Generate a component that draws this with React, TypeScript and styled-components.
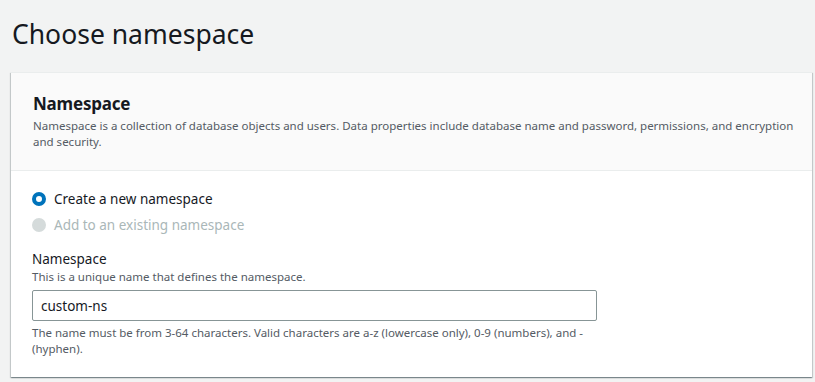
import { useState } from 'react';

import styled, { createGlobalStyle } from 'styled-components';

const GlobalStyle = createGlobalStyle`
  html, body {
    margin: 0;
    padding: 0;
    background: #f2f3f3;
    font-family: 'Noto Sans', 'Open Sans', Arial, sans-serif;
    color: #16191f;
  }
`;

type NamespaceMode = 'new' | 'existing';

function App() {
  const [mode, setMode] = useState<NamespaceMode>('new');
  const [name, setName] = useState<string>('custom-ns');

  return (
    <Page>
      <GlobalStyle />
      <Title>Choose namespace</Title>
      <Card>
        <CardHeader>
          <CardTitle>Namespace</CardTitle>
          <CardDescription>
            Namespace is a collection of database objects and users. Data
            properties include database name and password, permissions, and
            encryption and security.
          </CardDescription>
        </CardHeader>
        <CardBody>
          <RadioGroup>
            <RadioRow onClick={() => setMode('new')}>
              <RadioDot $checked={mode === 'new'} />
              <RadioLabel>Create a new namespace</RadioLabel>
            </RadioRow>
            <RadioRow $disabled>
              <RadioDot $disabled />
              <RadioLabel $disabled>Add to an existing namespace</RadioLabel>
            </RadioRow>
          </RadioGroup>
          <Field>
            <FieldLabel>Namespace</FieldLabel>
            <FieldDescription>
              This is a unique name that defines the namespace.
            </FieldDescription>
            <TextInput
              type="text"
              value={name}
              onChange={(e) => setName(e.target.value)}
            />
            <FieldHint>
              The name must be from 3-64 characters. Valid characters are a-z
              (lowercase only), 0-9 (numbers), and - (hyphen).
            </FieldHint>
          </Field>
        </CardBody>
      </Card>
    </Page>
  );
}

const Page = styled.div`
  padding: 14px 3px 0 11px;
  box-sizing: border-box;
  width: 815px;
  height: 382px;
  overflow: hidden;
`;

const Title = styled.h1`
  margin: 0 0 0 1px;
  font-size: 26.5px;
  font-weight: 400;
  line-height: 40px;
  height: 58px;
`;

const Card = styled.div`
  background: #ffffff;
  border-top: 1px solid #eaeded;
  box-shadow: 0 1px 1px 0 rgba(0, 28, 36, 0.3),
    1px 1px 1px 0 rgba(0, 28, 36, 0.15), -1px 1px 1px 0 rgba(0, 28, 36, 0.15);
`;

const CardHeader = styled.div`
  background: #fafafa;
  border-bottom: 1px solid #eaeded;
  padding: 19px 10px 20px 22px;
`;

const CardTitle = styled.h2`
  margin: 0;
  font-size: 17px;
  font-weight: 700;
  letter-spacing: -0.2px;
  line-height: 24px;
`;

const CardDescription = styled.p`
  margin: 2px 0 0;
  font-size: 11.5px;
  line-height: 16px;
  color: #545b64;
`;

const CardBody = styled.div`
  padding: 18px 20px 20px 21px;
`;

const RadioGroup = styled.div`
  display: flex;
  flex-direction: column;
  gap: 6px;
`;

const RadioRow = styled.label<{ $disabled?: boolean }>`
  display: flex;
  align-items: center;
  gap: 8px;
  height: 20px;
  cursor: ${({ $disabled }) => ($disabled ? 'default' : 'pointer')};
`;

const RadioDot = styled.span<{ $checked?: boolean; $disabled?: boolean }>`
  width: 14px;
  height: 14px;
  border-radius: 50%;
  box-sizing: border-box;
  flex-shrink: 0;
  background: ${({ $disabled }) => ($disabled ? '#d5dbdb' : '#ffffff')};
  border: ${({ $checked, $disabled }) =>
    $disabled
      ? '2px solid #d5dbdb'
      : $checked
        ? '4px solid #0073bb'
        : '2px solid #aab7b8'};
`;

const RadioLabel = styled.span<{ $disabled?: boolean }>`
  font-size: 13.5px;
  line-height: 20px;
  color: ${({ $disabled }) => ($disabled ? '#aab7b8' : '#16191f')};
`;

const Field = styled.div`
  margin-top: 14px;
  display: flex;
  flex-direction: column;
`;

const FieldLabel = styled.div`
  font-size: 13.5px;
  line-height: 20px;
`;

const FieldDescription = styled.div`
  font-size: 11.5px;
  line-height: 16px;
  color: #545b64;
`;

const TextInput = styled.input`
  margin-top: 5px;
  width: 565px;
  height: 31px;
  box-sizing: border-box;
  padding: 4px 8px;
  border: 1px solid #879596;
  border-radius: 2px;
  font-family: inherit;
  font-size: 13.5px;
  color: #16191f;
  background: #ffffff;
  outline: none;
`;

const FieldHint = styled.div`
  margin-top: 4px;
  width: 565px;
  font-size: 11.5px;
  line-height: 16px;
  color: #545b64;
`;

export default App;
